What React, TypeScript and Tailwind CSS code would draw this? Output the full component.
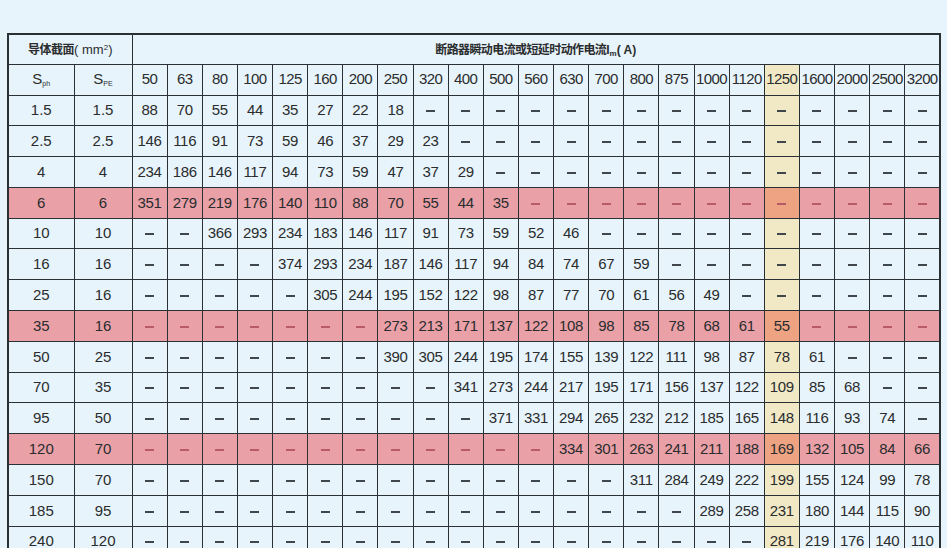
import React from 'react';

const currents = [
  '50', '63', '80', '100', '125', '160', '200', '250', '320', '400', '500', '560',
  '630', '700', '800', '875', '1000', '1120', '1250', '1600', '2000', '2500', '3200',
];

// [Sph, Spe, first filled column index, values]
const rows: [string, string, number, number[]][] = [
  ['1.5', '1.5', 0, [88, 70, 55, 44, 35, 27, 22, 18]],
  ['2.5', '2.5', 0, [146, 116, 91, 73, 59, 46, 37, 29, 23]],
  ['4', '4', 0, [234, 186, 146, 117, 94, 73, 59, 47, 37, 29]],
  ['6', '6', 0, [351, 279, 219, 176, 140, 110, 88, 70, 55, 44, 35]],
  ['10', '10', 2, [366, 293, 234, 183, 146, 117, 91, 73, 59, 52, 46]],
  ['16', '16', 4, [374, 293, 234, 187, 146, 117, 94, 84, 74, 67, 59]],
  ['25', '16', 5, [305, 244, 195, 152, 122, 98, 87, 77, 70, 61, 56, 49]],
  ['35', '16', 7, [273, 213, 171, 137, 122, 108, 98, 85, 78, 68, 61, 55]],
  ['50', '25', 7, [390, 305, 244, 195, 174, 155, 139, 122, 111, 98, 87, 78, 61]],
  ['70', '35', 9, [341, 273, 244, 217, 195, 171, 156, 137, 122, 109, 85, 68]],
  ['95', '50', 10, [371, 331, 294, 265, 232, 212, 185, 165, 148, 116, 93, 74]],
  ['120', '70', 12, [334, 301, 263, 241, 211, 188, 169, 132, 105, 84, 66]],
  ['150', '70', 14, [311, 284, 249, 222, 199, 155, 124, 99, 78]],
  ['185', '95', 16, [289, 258, 231, 180, 144, 115, 90]],
  ['240', '120', 18, [281, 219, 176, 140, 110]],
];

const pinkRows = ['6', '35', '120'];
const hiCol = 18;

function cellBg(pink: boolean, col: number) {
  if (col === hiCol) return pink ? 'bg-[#eea482]' : 'bg-[#f1e9c6]';
  return pink ? 'bg-[#e9a1a7]' : '';
}

function Dash({ pink }: { pink: boolean }) {
  return (
    <span
      className={
        'inline-block h-[2px] w-[9px] align-middle ' +
        (pink ? 'bg-[#b85a68]' : 'bg-[#3f464c]')
      }
    />
  );
}

const border = 'border border-[#2b3034]';

export default function App() {
  return (
    <div
      className="h-[548px] w-[947px] overflow-hidden bg-[#e8f4fb] pl-[7px] pt-[33px] text-[#2a2c2e]"
      style={{ fontFamily: '"Liberation Sans", Arial, sans-serif' }}
    >
      <table className="w-[934px] table-fixed border-collapse border-2 border-[#2b3034]">
        <colgroup>
          <col className="w-[66px]" />
          <col className="w-[58px]" />
          {currents.map((c) => (
            <col key={c} />
          ))}
        </colgroup>
        <thead>
          <tr className="h-[30px]">
            <th colSpan={2} className={border + ' text-center font-normal'}>
              <span
                className="text-[12px] font-bold tracking-[-0.5px]"
                style={{ fontFamily: '"Noto Sans CJK SC", sans-serif' }}
              >
                导体截面
              </span>
              <span className="text-[13px]">
                ( mm<sup className="text-[8px]">2</sup>)
              </span>
            </th>
            <th colSpan={23} className={border + ' text-center font-normal'}>
              <span
                className="text-[12px] font-bold tracking-[-0.6px]"
                style={{ fontFamily: '"Noto Sans CJK SC", sans-serif' }}
              >
                断路器瞬动电流或短延时动作电流
              </span>
              <span className="text-[12px] font-bold">
                I<sub className="text-[8px]">m</sub>( A)
              </span>
            </th>
          </tr>
          <tr className="h-[31px] text-[15px]">
            <th className={border + ' font-normal'}>
              S<sub className="text-[7px]">ph</sub>
            </th>
            <th className={border + ' font-normal'}>
              S<sub className="text-[7px]">PE</sub>
            </th>
            {currents.map((c, i) => (
              <th
                key={c}
                className={
                  border +
                  ' px-0 font-normal tracking-[-0.6px] ' +
                  (i === hiCol ? 'bg-[#f1e9c6]' : '')
                }
              >
                {c}
              </th>
            ))}
          </tr>
        </thead>
        <tbody>
          {rows.map(([sph, spe, start, vals]) => {
            const pink = pinkRows.includes(sph);
            return (
              <tr key={sph} className="h-[30.8px] text-center text-[15px]">
                <td className={border + ' ' + (pink ? 'bg-[#e9a1a7]' : '')}>{sph}</td>
                <td className={border + ' ' + (pink ? 'bg-[#e9a1a7]' : '')}>{spe}</td>
                {currents.map((c, i) => {
                  const v = i >= start && i < start + vals.length ? vals[i - start] : null;
                  return (
                    <td
                      key={c}
                      className={border + ' px-0 tracking-[-0.3px] ' + cellBg(pink, i)}
                    >
                      {v === null ? <Dash pink={pink} /> : v}
                    </td>
                  );
                })}
              </tr>
            );
          })}
        </tbody>
      </table>
    </div>
  );
}
